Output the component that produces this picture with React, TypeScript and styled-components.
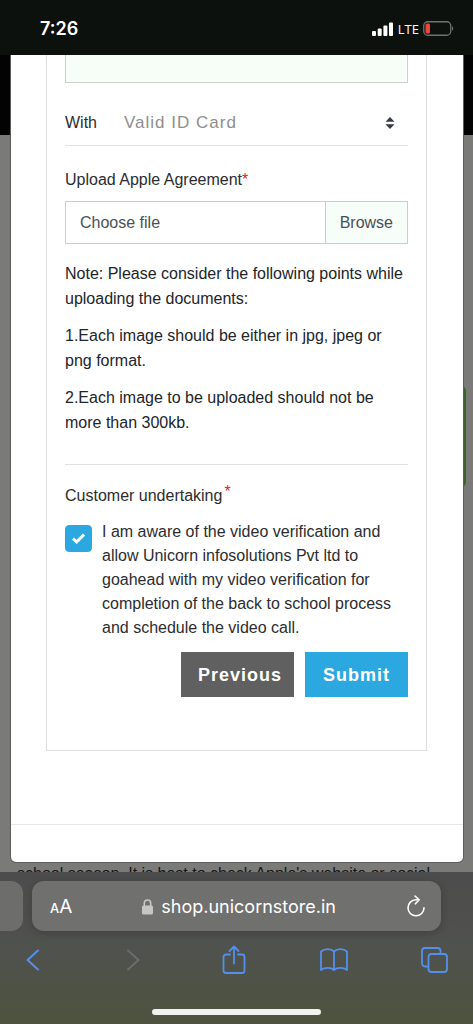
import React, { useState } from "react";
import styled, { createGlobalStyle } from "styled-components";

const GlobalStyle = createGlobalStyle`
  *, *::before, *::after { box-sizing: border-box; }
  body {
    margin: 0;
    background: #7a7a78;
    color: #2b2d2f;
    font: 16px/24px "Liberation Sans", Arial, sans-serif;
  }
  button, input, select, textarea { font: inherit; }
`;

const Screen = styled.div`
  display: flex;
  flex-direction: column;
  min-height: 100vh;
`;

const StatusBar = styled.header`
  display: flex;
  align-items: center;
  justify-content: space-between;
  height: 55px;
  padding: 2px 19px 0 40px;
  background: #0c110e;
  color: #fff;
`;

const Clock = styled.time`
  font: 600 18px/24px Inter, sans-serif;
`;

const StatusIcons = styled.div`
  display: flex;
  align-items: center;
  gap: 4px;
`;

const Carrier = styled.span`
  font: 500 13px/20px "Open Sans", sans-serif;
`;

const PageArea = styled.main`
  position: relative;
  flex: 1;
  overflow: hidden;
  padding: 0 10px 10px 11px;
  background: linear-gradient(#020302 80px, #7a7a78 80px);
`;

const BehindText = styled.p`
  position: absolute;
  left: 17px;
  bottom: -14px;
  margin: 0;
  white-space: nowrap;
  color: #161616;
`;

const BehindButton = styled.div`
  position: absolute;
  top: 331px;
  right: 7px;
  width: 40px;
  height: 101px;
  border-radius: 5px;
  background: #3c6329;
`;

const Modal = styled.section`
  position: relative;
  height: 100%;
  padding-bottom: 37px;
  border-radius: 0 0 5px 5px;
  background: #fff;
  box-shadow: 0 0 0 1px #5d5d5b;
`;

const ModalBody = styled.div`
  padding: 0 36px 73px 35px;
  border-bottom: 1px solid #e5e7e8;
`;

const Form = styled.form`
  display: flex;
  flex-direction: column;
  padding: 0 18px 53px;
  border: 1px solid #dedede;
  border-top: 0;
`;

const Remarks = styled.textarea`
  height: 28px;
  border: 1px solid #ccd0cc;
  border-top: 0;
  border-radius: 0;
  background: #f7fdf7;
  resize: none;
`;

const SelectRow = styled.div`
  display: flex;
  align-items: center;
  position: relative;
  height: 45px;
  margin-top: 18px;
  border-bottom: 1px solid #e0e0e0;
`;

const SelectLabel = styled.label`
  width: 59px;
`;

const Select = styled.select`
  flex: 1;
  height: 44px;
  padding: 0;
  border: 0;
  appearance: none;
  background: transparent;
  color: #8e8e8e;
  font-size: 17px;
  letter-spacing: 1px;
`;

const SelectArrows = styled.svg`
  position: absolute;
  right: 13px;
  top: 16px;
  pointer-events: none;
`;

const FieldLabel = styled.label`
  margin-top: 22px;
`;

const Required = styled.span<{ $raised?: boolean }>`
  color: #e8202a;
  vertical-align: ${(p) => (p.$raised ? "4px" : "baseline")};
  line-height: 16px;
  margin-left: ${(p) => (p.$raised ? "2px" : "0")};
`;

const FileField = styled.label`
  display: flex;
  position: relative;
  height: 43px;
  margin-top: 9px;
  border: 1px solid #c9cdd1;
  line-height: 41px;
  color: #495057;
`;

const FileInput = styled.input`
  position: absolute;
  inset: 0;
  width: 100%;
  opacity: 0;
`;

const FileName = styled.span`
  flex: 1;
  padding-left: 14px;
`;

const Browse = styled.span`
  padding: 0 14px;
  border-left: 1px solid #c9cdd1;
  background: #f7fdf9;
`;

const Notes = styled.div`
  display: flex;
  flex-direction: column;
  gap: 12px;
  margin-top: 17px;
  padding-bottom: 29px;
  border-bottom: 1px solid #e0e0e0;
  line-height: 25px;
  color: #212529;
`;

const Note = styled.p`
  margin: 0;
`;

const Legend = styled.div`
  margin-top: 19px;
  height: 24px;
`;

const Consent = styled.label`
  display: grid;
  grid-template-columns: 27px 1fr;
  column-gap: 10px;
  margin-top: 12px;
`;

const CheckHolder = styled.span`
  position: relative;
  height: 27px;
  margin-top: 5px;
`;

const CheckBox = styled.input`
  display: block;
  width: 27px;
  height: 27px;
  margin: 0;
  border: 1px solid #2ba8e0;
  border-radius: 4px;
  appearance: none;
  background: #fff;
  &:checked { background: #2ba8e0; }
`;

const CheckMark = styled.svg`
  position: absolute;
  left: 7px;
  top: 7px;
  pointer-events: none;
`;

const Actions = styled.div`
  display: flex;
  justify-content: flex-end;
  gap: 11px;
  margin-top: 12px;
`;

const ActionButton = styled.button<{ $primary?: boolean }>`
  height: 45px;
  padding: 0 ${(p) => (p.$primary ? "18px" : "12px 0 17px")};
  border: 0;
  background: ${(p) => (p.$primary ? "#2ba8e0" : "#606060")};
  color: #fff;
  font-size: 18px;
  font-weight: 700;
  letter-spacing: 1px;
`;

const BrowserChrome = styled.footer`
  display: flex;
  flex-direction: column;
  padding: 9px 0;
  background: linear-gradient(#4c4c4c, #50524e 50%, #4d533f);
`;

const TabStrip = styled.div`
  display: flex;
  gap: 9px;
  padding-right: 32px;
`;

const NextTab = styled.div`
  width: 23px;
  height: 50px;
  border-radius: 0 12px 12px 0;
  background: #6d6d6c;
`;

const AddressBar = styled.div`
  flex: 1;
  display: flex;
  align-items: center;
  justify-content: space-between;
  height: 50px;
  padding: 2px 15px 0 18px;
  border-radius: 12px;
  background: #70706f;
  box-shadow: 0 2px 8px #00000030;
  color: #fff;
`;

const IconButton = styled.button`
  display: flex;
  justify-content: center;
  align-items: center;
  min-width: 20px;
  padding: 0;
  border: 0;
  background: none;
  color: inherit;
`;

const TextSize = styled(IconButton)`
  align-items: baseline;
  font: 500 13px/24px Inter, sans-serif;
`;

const BigA = styled.span`
  font-size: 19px;
  font-weight: 400;
`;

const Address = styled.div`
  display: flex;
  align-items: center;
  gap: 8px;
  font: 18px/24px Inter, sans-serif;
`;

const Toolbar = styled.nav`
  display: flex;
  justify-content: space-between;
  margin-top: 14px;
  padding: 0 25px 0 19px;
  color: #5490ea;
`;

const ToolButton = styled(IconButton)`
  width: 28px;
  height: 30px;
  &:disabled { color: #6b6c69; }
`;

const HomeIndicator = styled.div`
  align-self: center;
  width: 169px;
  height: 6px;
  margin-top: 34px;
  border-radius: 3px;
  background: #f1f2ee;
`;

export default function App() {
  const [aware, setAware] = useState(true);
  return (
    <Screen>
      <GlobalStyle />
      <StatusBar>
        <Clock>7:26</Clock>
        <StatusIcons>
          <svg width="22" height="14" viewBox="0 0 22 14" fill="#fff">
            <rect x="0" y="9" width="4" height="5" rx="1" />
            <rect x="5.7" y="6.5" width="4" height="7.5" rx="1" />
            <rect x="11.4" y="3.5" width="4" height="10.5" rx="1" />
            <rect x="17" y="0.5" width="4" height="13.5" rx="1" />
          </svg>
          <Carrier>LTE</Carrier>
          <svg width="31" height="15" viewBox="0 0 31 15" fill="none">
            <rect x="0.75" y="0.75" width="27" height="13.5" rx="4" stroke="#6f7370" strokeWidth="1.3" />
            <rect x="2.5" y="2.5" width="4.5" height="10" rx="1.5" fill="#f0443a" />
            <path d="M29 5.2c1.6.7 1.6 3.9 0 4.6z" fill="#6f7370" />
          </svg>
        </StatusIcons>
      </StatusBar>

      <PageArea>
        <BehindText>school season. It is best to check Apple's website or social</BehindText>
        <BehindButton />
        <Modal>
          <ModalBody>
            <Form onSubmit={(e) => e.preventDefault()}>
              <Remarks aria-label="Remarks" />
              <SelectRow>
                <SelectLabel htmlFor="with">With</SelectLabel>
                <Select id="with">
                  <option>Valid ID Card</option>
                </Select>
                <SelectArrows width="10" height="12" viewBox="0 0 10 12" fill="#343a40">
                  <path d="M5 0 9.5 4.8h-9zM5 12 .5 7.2h9z" />
                </SelectArrows>
              </SelectRow>

              <FieldLabel htmlFor="agreement">
                Upload Apple Agreement<Required>*</Required>
              </FieldLabel>
              <FileField>
                <FileInput id="agreement" type="file" />
                <FileName>Choose file</FileName>
                <Browse>Browse</Browse>
              </FileField>

              <Notes>
                <Note>Note: Please consider the following points while uploading the documents:</Note>
                <Note>1.Each image should be either in jpg, jpeg or png format.</Note>
                <Note>2.Each image to be uploaded should not be more than 300kb.</Note>
              </Notes>

              <Legend>
                Customer undertaking<Required $raised>*</Required>
              </Legend>
              <Consent>
                <CheckHolder>
                  <CheckBox type="checkbox" checked={aware} onChange={(e) => setAware(e.target.checked)} />
                  {aware && (
                    <CheckMark width="13" height="13" viewBox="0 0 13 13" fill="none" stroke="#fff" strokeWidth="3">
                      <path d="M1 6.5 4.6 10 12 2.6" />
                    </CheckMark>
                  )}
                </CheckHolder>
                <span>
                  I am aware of the video verification and allow Unicorn infosolutions Pvt ltd to goahead with my
                  video verification for completion of the back to school process and schedule the video call.
                </span>
              </Consent>
              <Actions>
                <ActionButton type="button">Previous</ActionButton>
                <ActionButton type="submit" $primary>Submit</ActionButton>
              </Actions>
            </Form>
          </ModalBody>
        </Modal>
      </PageArea>

      <BrowserChrome>
        <TabStrip>
          <NextTab />
          <AddressBar>
            <TextSize type="button" aria-label="Text size">
              A<BigA>A</BigA>
            </TextSize>
            <Address>
              <svg width="11" height="16" viewBox="0 0 11 16">
                <rect y="6.5" width="11" height="9" rx="1.5" fill="#c6c6c6" />
                <path d="M2.3 7V4.2a3.2 3.2 0 0 1 6.4 0V7" fill="none" stroke="#c6c6c6" strokeWidth="1.6" />
              </svg>
              shop.unicornstore.in
            </Address>
            <IconButton type="button" aria-label="Reload">
              <svg width="20" height="24" viewBox="0 0 20 24" fill="none" stroke="#fff" strokeWidth="1.6" strokeLinecap="round" strokeLinejoin="round">
                <path d="M12.500 4.800H10A8 8 0 1 0 18 12.800" />
                <path d="M9 1l4.200 3.800L9.400 8.800" />
              </svg>
            </IconButton>
          </AddressBar>
        </TabStrip>
        <Toolbar>
          <ToolButton type="button" aria-label="Back">
            <svg width="14" height="22" viewBox="0 0 14 22" fill="none" stroke="currentColor" strokeWidth="2" strokeLinecap="round" strokeLinejoin="round">
              <path d="M12 1.500 1.500 11 12 20.500" />
            </svg>
          </ToolButton>
          <ToolButton type="button" aria-label="Forward" disabled>
            <svg width="14" height="22" viewBox="0 0 14 22" fill="none" stroke="currentColor" strokeWidth="2" strokeLinecap="round" strokeLinejoin="round">
              <path d="M2 1.500 12.500 11 2 20.500" />
            </svg>
          </ToolButton>
          <ToolButton type="button" aria-label="Share">
            <svg width="24" height="30" viewBox="0 0 24 30" fill="none" stroke="currentColor" strokeWidth="1.8" strokeLinecap="round" strokeLinejoin="round">
              <path d="M8 9.500H4A2.500 2.500 0 0 0 1.500 12v13.500A2.500 2.500 0 0 0 4 28h16a2.500 2.500 0 0 0 2.500-2.500V12A2.500 2.500 0 0 0 20 9.500h-4" />
              <path d="M12 18.500V2M7.500 6 12 1.500 16.500 6" />
            </svg>
          </ToolButton>
          <ToolButton type="button" aria-label="Bookmarks">
            <svg width="28" height="24" viewBox="0 0 28 24" fill="none" stroke="currentColor" strokeWidth="1.8" strokeLinejoin="round">
              <path d="M14 3.500C11 .4 4.500.4 1 3.500v18.500c3.500-2.800 10-2.800 13 0 3-2.800 9.500-2.800 13 0V3.500C23.500.4 17 .4 14 3.500zV22" />
            </svg>
          </ToolButton>
          <ToolButton type="button" aria-label="Tabs">
            <svg width="27" height="26" viewBox="0 0 27 26" fill="none" stroke="currentColor" strokeWidth="1.8">
              <rect x="7.500" y="7" width="18.500" height="18" rx="3" />
              <path d="M7.500 19.500H4a3 3 0 0 1-3-3V4a3 3 0 0 1 3-3h12.500a3 3 0 0 1 3 3v3" />
            </svg>
          </ToolButton>
        </Toolbar>
        <HomeIndicator />
      </BrowserChrome>
    </Screen>
  );
}
